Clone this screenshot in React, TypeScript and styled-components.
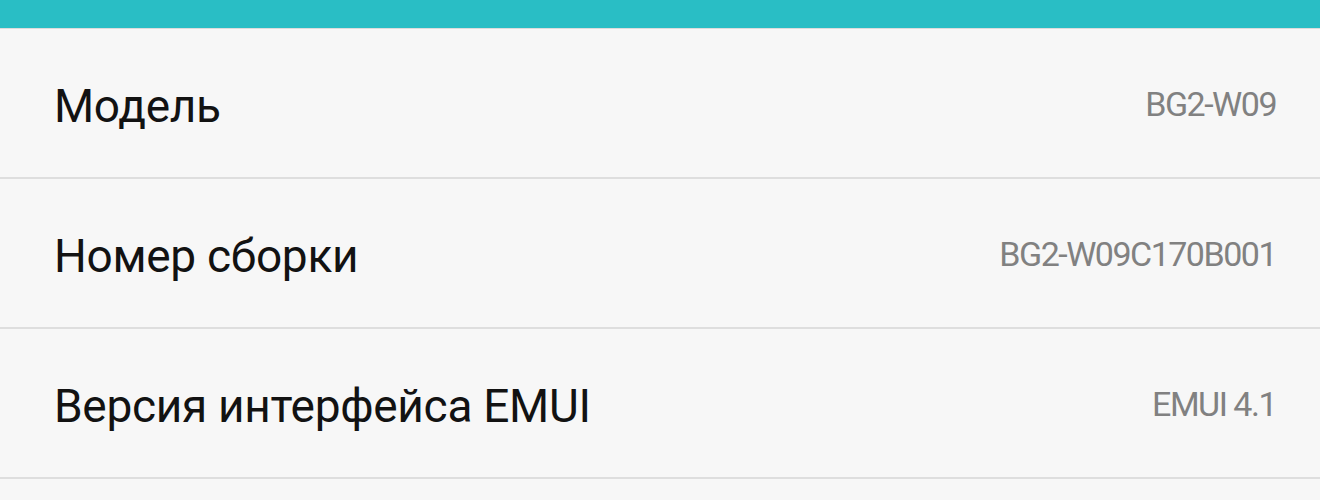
import React from "react";
import styled, { createGlobalStyle } from "styled-components";

const Global = createGlobalStyle`
  html, body { margin: 0; padding: 0; background: #f7f7f7; }
  body { font-family: Roboto, "Noto Sans", "Liberation Sans", sans-serif; }
`;

const Page = styled.div`
  width: 1320px;
  height: 500px;
  overflow: hidden;
  background: #f7f7f7;
  display: flex;
  flex-direction: column;
`;

const TopBar = styled.div`
  height: 28px;
  flex: 0 0 28px;
  background: #29bec5;
  border-bottom: 1px solid #dcdcdc;
`;

const Row = styled.div`
  flex: 0 0 148px;
  height: 148px;
  display: flex;
  align-items: center;
  justify-content: space-between;
  padding: 0 44px 0 54px;
  border-bottom: 2px solid #dedede;
`;

const Label = styled.span`
  font-family: Roboto, "Noto Sans", sans-serif;
  font-size: 46px;
  color: #121212;
  letter-spacing: -0.3px;
  margin-top: 6px;
`;

const Value = styled.span`
  font-family: Roboto, "Noto Sans", sans-serif;
  font-size: 34px;
  color: #818181;
  letter-spacing: -1.5px;
  margin-top: 2px;
`;

const items = [
  { label: "Модель", value: "BG2-W09" },
  { label: "Номер сборки", value: "BG2-W09C170B001" },
  { label: "Версия интерфейса EMUI", value: "EMUI 4.1" },
];

export default function App() {
  return (
    <>
      <Global />
      <Page>
        <TopBar />
        {items.map((it) => (
          <Row key={it.label}>
            <Label>{it.label}</Label>
            <Value>{it.value}</Value>
          </Row>
        ))}
      </Page>
    </>
  );
}
